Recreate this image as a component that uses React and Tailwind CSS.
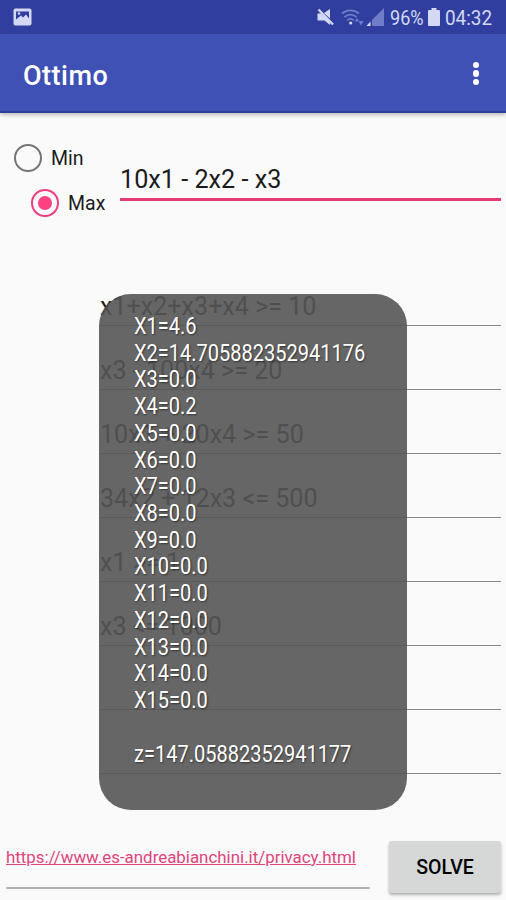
import React from "react";

const constraints = [
  "x1+x2+x3+x4 >= 10",
  "x3 - 100x4 >= 20",
  "10x1 + 20x4 >= 50",
  "34x2 + 12x3 <= 500",
  "x1 >= 1",
  "x3 <= 1000",
  "",
  "",
];

const results = [
  "X1=4.6",
  "X2=14.705882352941176",
  "X3=0.0",
  "X4=0.2",
  "X5=0.0",
  "X6=0.0",
  "X7=0.0",
  "X8=0.0",
  "X9=0.0",
  "X10=0.0",
  "X11=0.0",
  "X12=0.0",
  "X13=0.0",
  "X14=0.0",
  "X15=0.0",
];

const StatusBar = () => (
  <div className="flex h-[34px] items-center bg-[#303f9f] pr-3.5 pl-[13px] text-[#d3d8f4]">
    <svg width="19" height="18" viewBox="0 0 19 18">
      <rect x="0.5" y="0.5" width="18" height="17" rx="2" fill="currentColor" />
      <path d="M3 3.5h13v7l-3-4-3 3-2-2-5 4z" fill="#303f9f" />
      <circle cx="6" cy="5.5" r="1.3" fill="currentColor" />
    </svg>

    <div className="ml-auto flex items-center">
      {/* Muted speaker */}
      <svg width="17" height="18" viewBox="0 0 17 18" fill="currentColor">
        <path d="M0.5 5.5H4L13 14v3L7.5 12.5h-7z" />
        <path d="M7 5L13 1v9.5z" />
        <path d="M1.5 1.5l14.5 15" stroke="currentColor" strokeWidth="2.2" />
      </svg>
      {/* Wifi */}
      <svg
        className="ml-[7px]"
        width="23"
        height="18"
        viewBox="0 0 23 18"
        fill="none"
        stroke="#6f7cc8"
        strokeWidth="1.8"
      >
        <path d="M1 5.5a13 13 0 0 1 17 0M3.5 9a9 9 0 0 1 12 0M6.2 12.3a5 5 0 0 1 6.6 0" />
        <circle cx="9.7" cy="15" r="1.6" fill="#d3d8f4" stroke="none" />
        <path d="M16 10l-2.5 3.5h5zM20 17.5L17.5 13h5z" fill="#6f7cc8" stroke="none" />
      </svg>
      {/* Signal */}
      <svg className="ml-0.5" width="19" height="18" viewBox="0 0 19 18">
        <path d="M18 0v18H6v-6z" fill="#6f7cc8" />
        <path d="M4.5 13.5V18H0.5z" fill="#d3d8f4" />
      </svg>
      <span className="ml-[5px] w-[35px] pt-0.5 text-[21px] leading-none whitespace-nowrap">
        <span className="inline-block origin-left scale-x-[0.86]">96%</span>
      </span>
      <svg className="ml-[3px]" width="12" height="18" viewBox="0 0 12 18" fill="currentColor">
        <path d="M3.5 0h5v2H11a1 1 0 0 1 1 1v14a1 1 0 0 1-1 1H1a1 1 0 0 1-1-1V3a1 1 0 0 1 1-1h2.5z" />
      </svg>
      <span className="ml-[5px] w-[47px] pt-0.5 text-[21px] leading-none whitespace-nowrap">
        <span className="inline-block origin-left scale-x-[0.9]">04:32</span>
      </span>
    </div>
  </div>
);

const AppBar = () => (
  <header className="relative flex h-[79px] items-center justify-between border-b-2 border-[#2c3f9b] bg-[#3f51b5] pt-0.5 pr-[27px] pl-[23px] text-white shadow-[0_2px_4px_rgba(0,0,0,0.25)]">
    <h1 className="pt-1.5 text-[27px] leading-none font-medium tracking-[0.5px]">
      Ottimo
    </h1>
    <div className="flex flex-col gap-[2px]">
      <span className="size-[6.5px] rounded-full bg-white" />
      <span className="size-[6.5px] rounded-full bg-white" />
      <span className="size-[6.5px] rounded-full bg-white" />
    </div>
  </header>
);

const Radio = ({ label, checked }) => (
  <label className="flex h-7 items-center gap-[9px] text-[19.5px] leading-7">
    <span
      className={`flex size-7 items-center justify-center rounded-full border-[2.5px] ${
        checked ? "border-[#f03c80]" : "border-[#757575]"
      }`}
    >
      {checked && <span className="size-3.5 rounded-full bg-[#ff4081]" />}
    </span>
    <span className="pt-0.5">{label}</span>
  </label>
);

const Toast = () => (
  <div className="absolute top-[294px] left-[99px] h-[516px] w-[308px] rounded-[32px] bg-[#555555]/90 pt-[20px] pl-[35px] text-[23px] leading-[26.72px] text-white">
    <div className="origin-left scale-x-[0.87] whitespace-nowrap [text-shadow:1px_1px_2px_rgba(0,0,0,0.5)]">
      {results.map((line) => (
        <p key={line}>{line}</p>
      ))}
      <p className="mt-[27px]">z=147.05882352941177</p>
    </div>
  </div>
);

const App = () => {
  return (
    <div className="relative flex h-[900px] w-[506px] flex-col overflow-hidden bg-[#fafafa] font-['Roboto',sans-serif] text-[#1c1c1c]">
      <StatusBar />
      <AppBar />

      {/* Objective function */}
      <section className="flex h-[149px] items-start pt-[31px] pr-[5px]">
        <div className="flex w-[120px] flex-col gap-[17px]">
          <div className="pl-[14px]">
            <Radio label="Min" />
          </div>
          <div className="pl-[31px]">
            <Radio label="Max" checked />
          </div>
        </div>
        <div className="mt-[18px] h-[39px] flex-1 border-b-[3px] border-[#e63a77] text-[25.2px] leading-9">
          10x1 - 2x2 - x3
        </div>
      </section>

      {/* Constraints */}
      <section className="flex flex-col pr-[5px] pl-[100px]">
        {constraints.map((c, i) => (
          <div
            key={i}
            className="flex h-16 items-end border-b-[1.5px] border-[#868686] pb-1 text-[25.1px] leading-7"
          >
            {c}
          </div>
        ))}
      </section>

      <footer className="mt-auto flex h-[59px] items-start justify-between pr-[5px] pl-1.5">
        <div className="h-12 w-[364px] border-b-2 border-[#b0b0b0] pt-1.5 text-[16.9px] leading-5 text-[#e0447c]">
          <a className="whitespace-nowrap underline">
            https://www.es-andreabianchini.it/privacy.html
          </a>
        </div>
        <button className="h-[52px] w-28 rounded-[3px] bg-[#d6d7d7] pt-0.5 text-[19.5px] font-medium text-black shadow-[0_2px_3px_rgba(0,0,0,0.3)]">
          SOLVE
        </button>
      </footer>

      <Toast />
    </div>
  );
};

export default App;
